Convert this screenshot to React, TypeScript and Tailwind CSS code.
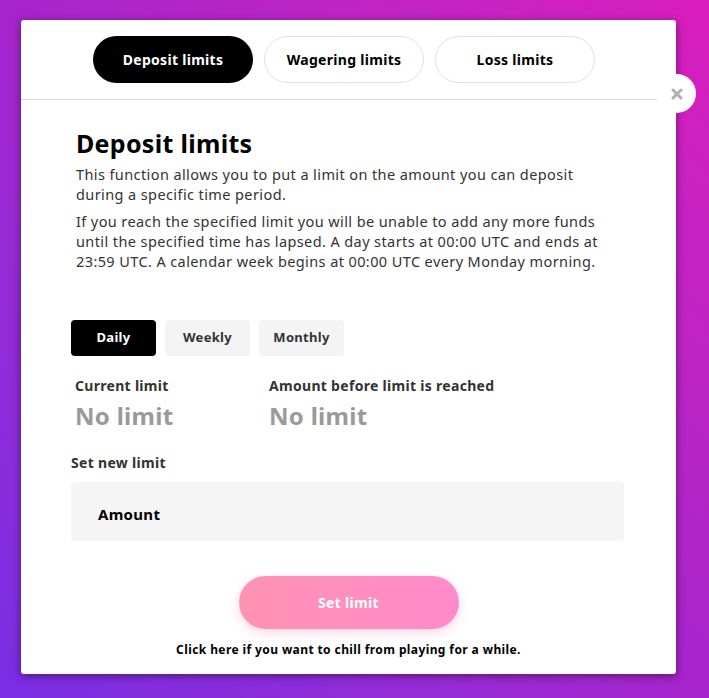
import React, { useState } from 'react';

const mainTabs = ['Deposit limits', 'Wagering limits', 'Loss limits'];
const periods = ['Daily', 'Weekly', 'Monthly'];

export default function App() {
  const [tab, setTab] = useState(0);
  const [period, setPeriod] = useState(0);

  return (
    <div
      className="w-[709px] h-[698px] overflow-hidden bg-linear-to-tr from-[#7a2de4] via-[#a624cc] to-[#d81cbc] pt-[20px] pl-[21px] tracking-[0.3px]"
      style={{ fontFamily: '"Noto Sans", Inter, sans-serif' }}
    >
      <div className="relative w-[655px] h-[654px] bg-white rounded-[3px] shadow-[0_2px_8px_rgba(0,0,0,0.45)] flex flex-col">
        {/* close */}
        <button className="absolute left-[636px] top-[54px] w-[39px] h-[39px] rounded-full bg-white flex items-center justify-center">
          <svg width="12" height="12" viewBox="0 0 12 12">
            <path d="M2 2 L10 10 M10 2 L2 10" stroke="#b0b0b0" strokeWidth="3" strokeLinecap="round" />
          </svg>
        </button>

        <div className="flex justify-center gap-[11px] pt-[16px] pr-[9px]">
          {mainTabs.map((t, i) => (
            <button
              key={t}
              onClick={() => setTab(i)}
              className={`w-[160px] h-[47px] rounded-full text-[14px] font-bold ${
                i === tab ? 'bg-black text-white' : 'bg-white text-black border border-[#e0e0e0]'
              }`}
            >
              {t}
            </button>
          ))}
        </div>
        <div className="mt-[16px] mr-[19px] border-b border-[#d9d9d9]" />

        <div className="px-[55px] pt-[28px]">
          <h1 className="text-[25px] font-bold text-black leading-[30px] tracking-[0.3px]">Deposit limits</h1>
          <p className="mt-[6px] w-[540px] text-[14.5px] leading-[20px] text-[#333] tracking-[0.4px]">
            This function allows you to put a limit on the amount you can deposit
            <br />
            during a specific time period.
          </p>
          <p className="mt-[7px] w-[540px] text-[14.5px] leading-[20px] text-[#333] tracking-[0.4px]">
            If you reach the specified limit you will be unable to add any more funds until the specified time has
            lapsed. A day starts at 00:00 UTC and ends at 23:59 UTC. A calendar week begins at 00:00 UTC every Monday
            morning.
          </p>
        </div>

        <div className="px-[50px] pt-[49px]">
          <div className="flex gap-[9px]">
            {periods.map((p, i) => (
              <button
                key={p}
                onClick={() => setPeriod(i)}
                className={`w-[85px] h-[36px] rounded-[4px] text-[13px] font-bold ${
                  i === period ? 'bg-black text-white' : 'bg-[#f4f4f4] text-[#333]'
                }`}
              >
                {p}
              </button>
            ))}
          </div>

          <div className="flex mt-[20px] pl-[4px]">
            <div className="w-[194px]">
              <div className="text-[14px] font-bold text-[#333] leading-[20px]">Current limit</div>
              <div className="mt-[3px] text-[24px] font-bold text-[#9a9a9a] leading-[34px]">No limit</div>
            </div>
            <div>
              <div className="text-[14px] font-bold text-[#333] leading-[20px]">Amount before limit is reached</div>
              <div className="mt-[3px] text-[24px] font-bold text-[#9a9a9a] leading-[34px]">No limit</div>
            </div>
          </div>

          <div className="mt-[20px] text-[14px] font-bold text-[#333] leading-[20px]">Set new limit</div>
          <div className="mt-[9px] w-[553px] h-[59px] rounded-[4px] bg-[#f5f5f5] flex items-center pl-[27px] pt-[6px]">
            <span className="text-[15px] font-bold text-black">Amount</span>
          </div>

          <div className="flex flex-col items-center mt-[35px]">
            <button className="w-[220px] h-[53px] rounded-full bg-linear-to-r from-[#ff93b1] to-[#ff8acb] text-white text-[14px] font-bold shadow-[0_4px_12px_rgba(255,140,180,0.35)]">
              Set limit
            </button>
            <div className="mt-[12px] text-[12px] font-bold text-black tracking-[0.4px]">
              Click here if you want to chill from playing for a while.
            </div>
          </div>
        </div>
      </div>
    </div>
  );
}
